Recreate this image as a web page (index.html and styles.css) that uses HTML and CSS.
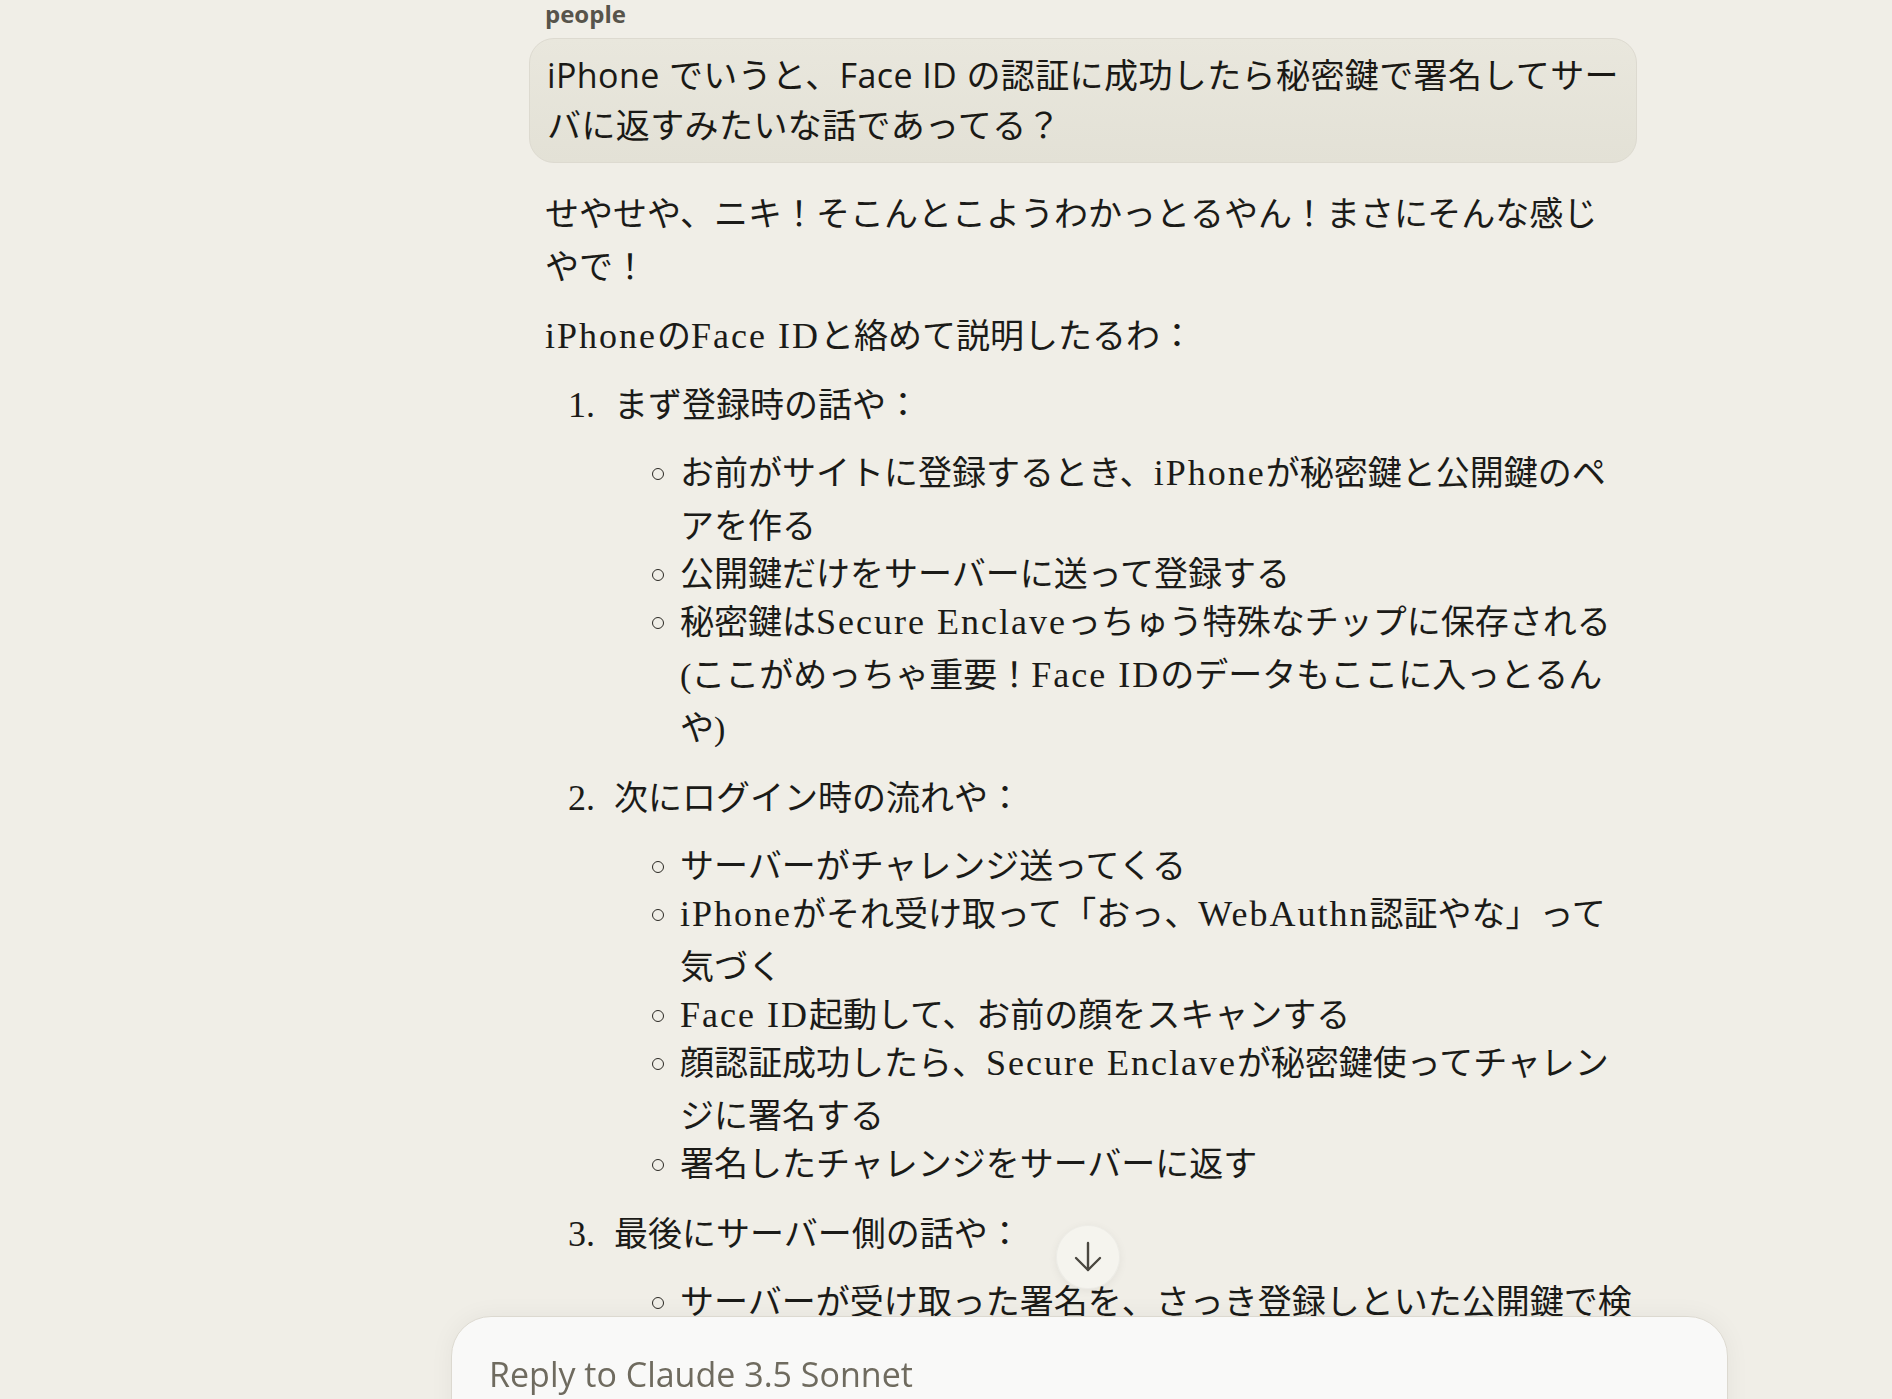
FILE: index.html
```html
<!DOCTYPE html>
<html lang="ja">
<head>
    <meta charset="UTF-8">
    <meta name="viewport" content="width=device-width, initial-scale=1.0">
    <title>Claude</title>
    <link rel="stylesheet" href="styles.css">
</head>
<body>
    <main class="thread">
        <div class="prev-tail">people</div>

        <div class="user-msg">iPhone でいうと、Face ID の認証に成功したら秘密鍵で署名してサーバに返すみたいな話であってる？</div>

        <div class="reply">
            <p>せやせや、ニキ！そこんとこようわかっとるやん！まさにそんな感じやで！</p>
            <p><span class="en">iPhone</span>の<span class="en">Face ID</span>と絡めて説明したるわ：</p>
            <ol class="steps">
                <li>まず登録時の話や：
                    <ul class="points">
                        <li>お前がサイトに登録するとき、<span class="en">iPhone</span>が秘密鍵と公開鍵のペアを作る</li>
                        <li>公開鍵だけをサーバーに送って登録する</li>
                        <li>秘密鍵は<span class="en">Secure Enclave</span>っちゅう特殊なチップに保存される(ここがめっちゃ重要！<span class="en">Face ID</span>のデータもここに入っとるんや)</li>
                    </ul>
                </li>
                <li>次にログイン時の流れや：
                    <ul class="points">
                        <li>サーバーがチャレンジ送ってくる</li>
                        <li><span class="en">iPhone</span>がそれ受け取って「おっ、<span class="en">WebAuthn</span>認証やな」って気づく</li>
                        <li><span class="en">Face ID</span>起動して、お前の顔をスキャンする</li>
                        <li>顔認証成功したら、<span class="en">Secure Enclave</span>が秘密鍵使ってチャレンジに署名する</li>
                        <li>署名したチャレンジをサーバーに返す</li>
                    </ul>
                </li>
                <li>最後にサーバー側の話や：
                    <ul class="points">
                        <li>サーバーが受け取った署名を、さっき登録しといた公開鍵で検証する</li>
                    </ul>
                </li>
            </ol>
        </div>
    </main>

    <button class="scroll-down" type="button" aria-label="Scroll to bottom">
        <svg width="32" height="32" viewBox="0 0 32 32" fill="none" stroke="#4a4740" stroke-width="2.4" stroke-linecap="round" stroke-linejoin="round">
            <path d="M16 2 V29"/>
            <path d="M4 17 L16 29 L28 17"/>
        </svg>
    </button>

    <div class="composer">
        <div class="composer-input">Reply to Claude 3.5 Sonnet</div>
    </div>
</body>
</html>
```

FILE: styles.css
```css
/* page */
body {
    margin: 0;
    height: 1399px;
    overflow: hidden;
    background: #f0eee7;
    color: #1b1b18;
}

.thread {
    margin-left: 529px;
    width: 1108px;
}

/* end of the previous message, scrolled off the top */
.prev-tail {
    margin-top: -2px;
    padding-left: 16px;
    font-family: "Open Sans", sans-serif;
    font-weight: 700;
    font-size: 24px;
    line-height: 32px;
    color: #57544b;
}

/* user bubble */
.user-msg {
    margin-top: 8px;
    padding: 12px 14px 12px 17px;
    border: 1px solid #dddad0;
    border-radius: 25px;
    background: linear-gradient(to bottom, #e9e7dd, #e3e1d6);
    font-family: "Open Sans", "Noto Sans CJK JP", sans-serif;
    font-size: 34px;
    line-height: 49.5px;
    letter-spacing: 0.4px;
    color: #1a1915;
}

/* assistant answer */
.reply {
    width: 1080px;
    margin-top: 25px;
    padding-left: 16px;
    font-family: "Liberation Serif", "Noto Sans CJK JP", serif;
    font-size: 34px;
    line-height: 53px;
}
.reply p {
    margin: 0 0 16px;
}
.reply .en {
    font-size: 36px;
    letter-spacing: 2px;
}

.steps {
    margin: 0;
    padding-left: 69px;
    list-style: none;
    counter-reset: step;
}
.steps > li {
    counter-increment: step;
}
.steps > li + li {
    margin-top: 17px;
}
.steps > li::before {
    content: counter(step) ".";
    display: inline-block;
    width: 46px;
    margin-left: -46px;
    font-size: 36px;
}

.points {
    margin: 15px -7px 0 0;
    padding: 0;
    list-style: none;
}
.points li {
    padding-left: 66px;
}
.points li + li {
    margin-top: -5px;
}
.points li::before {
    content: "";
    display: inline-block;
    box-sizing: border-box;
    width: 12px;
    height: 12px;
    margin-left: -28px;
    margin-right: 16px;
    border: 1.4px solid #2a2823;
    border-radius: 50%;
    vertical-align: 5px;
}

/* floating controls */
.scroll-down {
    position: fixed;
    left: 1056px;
    top: 1225px;
    width: 64px;
    height: 64px;
    padding: 0;
    display: flex;
    align-items: center;
    justify-content: center;
    border: 1px solid rgba(0, 0, 0, 0.03);
    border-radius: 50%;
    background: rgba(244, 243, 238, 0.95);
    box-shadow: 0 2px 10px rgba(0, 0, 0, 0.06);
}

.composer {
    position: fixed;
    left: 451px;
    top: 1316px;
    width: 1277px;
    height: 180px;
    box-sizing: border-box;
    border: 1px solid #dcd9d0;
    border-radius: 40px;
    background: #f9f9f8;
    box-shadow: 0 0 24px rgba(0, 0, 0, 0.05);
}
.composer-input {
    padding: 33px 0 0 37px;
    font-family: "Open Sans", sans-serif;
    font-size: 34px;
    line-height: 48px;
    color: #6f6b5f;
}
```
